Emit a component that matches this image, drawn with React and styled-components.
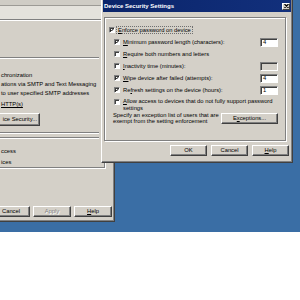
import React from 'react';
import styled, { createGlobalStyle } from 'styled-components';

const FACE = '#d4d0c8';

const Global = createGlobalStyle`
  html, body { margin: 0; padding: 0; background: #ffffff; }
  body { width: 300px; height: 300px; overflow: hidden; font-family: "Liberation Sans", Arial, sans-serif; }
`;

const Page = styled.div`
  width: 300px;
  height: 300px;
  background: #ffffff;
`;

const Desktop = styled.div`
  position: relative;
  width: 300px;
  height: 232px;
  background: #3a6ea5;
  overflow: hidden;
`;

const Window = styled.div`
  position: absolute;
  left: ${p => p.$x}px;
  top: ${p => p.$y}px;
  width: ${p => p.$w}px;
  height: ${p => p.$h}px;
  box-sizing: border-box;
  background: ${FACE};
  border: 1px solid;
  border-color: #ffffff #404040 #404040 #ffffff;
  box-shadow: inset -1px -1px #808080;
  display: flex;
  flex-direction: column;
  font-size: 5.8px;
  color: #000;
  overflow: hidden;
`;

const TitleBar = styled.div`
  height: 12px;
  margin: 1px 1px 0 1px;
  background: linear-gradient(to right, #0a246a, #12307c);
  display: flex;
  align-items: center;
  justify-content: space-between;
  padding: 0 1px 0 1px;
`;

const Title = styled.span`
  color: #fff;
  font-weight: bold;
  font-size: 6px;
`;

const CloseBtn = styled.div`
  width: 8px;
  height: 7px;
  box-sizing: border-box;
  background: ${FACE};
  border: 1px solid;
  border-color: #ffffff #404040 #404040 #ffffff;
  display: flex;
  align-items: center;
  justify-content: center;
`;

const Frame = styled.div`
  margin: 5px 0 0 2px;
  width: 182px;
  height: 124px;
  box-sizing: border-box;
  border: 1px solid #808080;
  box-shadow: inset 1px 1px #ffffff, 1px 1px #ffffff;
  padding: 6px 7px 0 4px;
  display: flex;
  flex-direction: column;
`;

const Row = styled.div`
  height: 12px;
  display: flex;
  align-items: center;
  padding-left: ${p => p.$indent || 0}px;
`;

const WrapRow = styled.div`
  display: flex;
  align-items: flex-start;
  padding-left: ${p => p.$indent || 0}px;
  padding-top: 3px;
  height: 16px;
  box-sizing: border-box;
`;

const Label = styled.span`
  margin-left: ${p => p.$gap || 3}px;
  flex: 1;
  white-space: nowrap;
  line-height: 7px;
  display: flex;
  align-items: center;
`;

const WrapLabel = styled.span`
  margin-left: 3px;
  margin-top: -1px;
  display: flex;
  flex-direction: column;
`;

const WrapLine = styled.span`
  height: 7px;
  line-height: 7px;
  white-space: nowrap;
`;

const Focus = styled.span`
  display: inline-flex;
  align-items: center;
  height: 8px;
  box-sizing: border-box;
  border: 1px dotted #707070;
  padding: 0 1px;
  margin-left: -1px;
  line-height: 6px;
`;

const BoxEl = styled.span`
  width: 6px;
  height: 6px;
  box-sizing: border-box;
  background: #fff;
  border: 1px solid;
  border-color: #808080 #ffffff #ffffff #808080;
  box-shadow: inset 1px 1px #404040;
  display: inline-flex;
  align-items: center;
  justify-content: center;
  flex: none;
`;

const Field = styled.div`
  width: 18px;
  height: 9px;
  box-sizing: border-box;
  background: ${p => (p.$disabled ? FACE : '#fff')};
  border: 1px solid;
  border-color: #808080 #ffffff #ffffff #808080;
  box-shadow: inset 1px 1px #404040;
  padding-left: 2px;
  display: flex;
  align-items: center;
  line-height: 7px;
`;

const ExceptRow = styled.div`
  display: flex;
  align-items: center;
  justify-content: space-between;
  padding-left: 4px;
  padding-right: 0px;
`;

const Note = styled.div`
  line-height: 6px;
  width: 110px;
`;

const Button = styled.div`
  width: ${p => p.$w || 37}px;
  height: ${p => p.$h || 11}px;
  box-sizing: border-box;
  background: ${FACE};
  border: 1px solid;
  border-color: #ffffff #404040 #404040 #ffffff;
  box-shadow: inset -1px -1px #808080;
  display: flex;
  align-items: center;
  justify-content: ${p => p.$align || 'center'};
  flex: none;
  white-space: nowrap;
  overflow: hidden;
  color: ${p => (p.$disabled ? '#808080' : '#000')};
  text-shadow: ${p => (p.$disabled ? '1px 1px #ffffff' : 'none')};
  line-height: 7px;
`;

const ButtonRow = styled.div`
  display: flex;
  justify-content: ${p => p.$justify || 'flex-end'};
  gap: ${p => p.$gap || 4}px;
  margin-top: ${p => p.$top || 4}px;
  padding-right: ${p => p.$right || 3}px;
  padding-left: ${p => p.$left || 0}px;
`;

/* back window parts */
const TopStrip = styled.div`
  height: 5px;
  margin: 1px 1px 0 1px;
  background: #cfccc5;
  border-bottom: 1px solid #9c9a95;
`;

const Band = styled.div`
  height: 13px;
  margin: 0 1px;
  background: #e4e2dc;
  border-bottom: 1px solid #808080;
  box-shadow: 0 1px #ffffff;
`;

const Sheet = styled.div`
  margin: 0 0 0 1px;
  width: 138px;
  height: 148px;
  box-sizing: border-box;
  border-right: 1px solid #808080;
  border-bottom: 1px solid #808080;
  box-shadow: 1px 1px #ffffff;
  display: flex;
  flex-direction: column;
  padding-left: 34px;
`;

const Rule = styled.div`
  height: 0;
  border-top: 1px solid #808080;
  border-bottom: 1px solid #ffffff;
  margin-top: ${p => p.$top || 0}px;
  margin-left: -34px;
  margin-right: 5px;
`;

const Line = styled.div`
  height: ${p => p.$h || 10}px;
  display: flex;
  align-items: center;
  white-space: nowrap;
  margin-top: ${p => p.$top || 0}px;
`;

const SheetButton = styled(Button)`
  margin-left: -9px;
  margin-top: 4px;
  padding-right: 2px;
`;

const U = styled.span`
  text-decoration: underline;
`;

const Check = ({ checked }) => (
  <BoxEl>
    {checked && (
      <svg width="4" height="4" viewBox="0 0 8 8">
        <path d="M0.8 3.6 L3 6 L7.4 1.2" stroke="#000" strokeWidth="1.9" fill="none" />
      </svg>
    )}
  </BoxEl>
);

export default function App() {
  return (
    <Page>
      <Global />
      <Desktop>
        <Window $x={-35} $y={-2} $w={150} $h={224}>
          <TopStrip />
          <Band />
          <Sheet>
            <Rule $top={37} />
            <Line $h={10} $top={11}>chronization</Line>
            <Line $h={9}>ations via SMTP and Text Messaging</Line>
            <Line $h={9}>to user specified SMTP addresses</Line>
            <Line $h={10} $top={2}><U>HTTP(s)</U></Line>
            <SheetButton $w={48} $h={13} $align="flex-end">ice Security...</SheetButton>
            <Rule $top={6} />
            <Rule $top={3} />
            <Line $h={10} $top={7}>ccess</Line>
            <Line $h={10} $top={1}>ices</Line>
          </Sheet>
          <ButtonRow $gap={3} $top={38} $right={1} $left={26} $justify="flex-start">
            <Button $w={38}>Cancel</Button>
            <Button $w={38} $disabled>Apply</Button>
            <Button $w={38}><U>H</U>elp</Button>
          </ButtonRow>
        </Window>

        <Window $x={101} $y={-2} $w={192} $h={165}>
          <TitleBar>
            <Title>Device Security Settings</Title>
            <CloseBtn>
              <svg width="5" height="4" viewBox="0 0 5 4">
                <path d="M0.5 0 L4.5 4 M4.5 0 L0.5 4" stroke="#000" strokeWidth="1.1" />
              </svg>
            </CloseBtn>
          </TitleBar>
          <Frame>
            <Row>
              <Check checked />
              <Label $gap={2}>
                <Focus><span><U>E</U>nforce password on device</span></Focus>
              </Label>
            </Row>
            <Row $indent={5}>
              <Check checked />
              <Label><U>M</U>inimum password length (characters):</Label>
              <Field>4</Field>
            </Row>
            <Row $indent={5}>
              <Check />
              <Label><U>R</U>equire both numbers and letters</Label>
            </Row>
            <Row $indent={5}>
              <Check />
              <Label><U>I</U>nactivity time (minutes):</Label>
              <Field $disabled />
            </Row>
            <Row $indent={5}>
              <Check checked />
              <Label><U>W</U>ipe device after failed (attempts):</Label>
              <Field>4</Field>
            </Row>
            <Row $indent={5}>
              <Check checked />
              <Label>Re<U>f</U>resh settings on the device (hours):</Label>
              <Field>1</Field>
            </Row>
            <WrapRow $indent={5}>
              <Check />
              <WrapLabel>
                <WrapLine><U>A</U>llow access to devices that do not fully support password</WrapLine>
                <WrapLine>settings</WrapLine>
              </WrapLabel>
            </WrapRow>
            <ExceptRow>
              <Note>Specify an exception list of users that are exempt from the setting enforcement</Note>
              <Button $w={57}>E<U>x</U>ceptions...</Button>
            </ExceptRow>
          </Frame>
          <ButtonRow>
            <Button>OK</Button>
            <Button>Cancel</Button>
            <Button><U>H</U>elp</Button>
          </ButtonRow>
        </Window>
      </Desktop>
    </Page>
  );
}
